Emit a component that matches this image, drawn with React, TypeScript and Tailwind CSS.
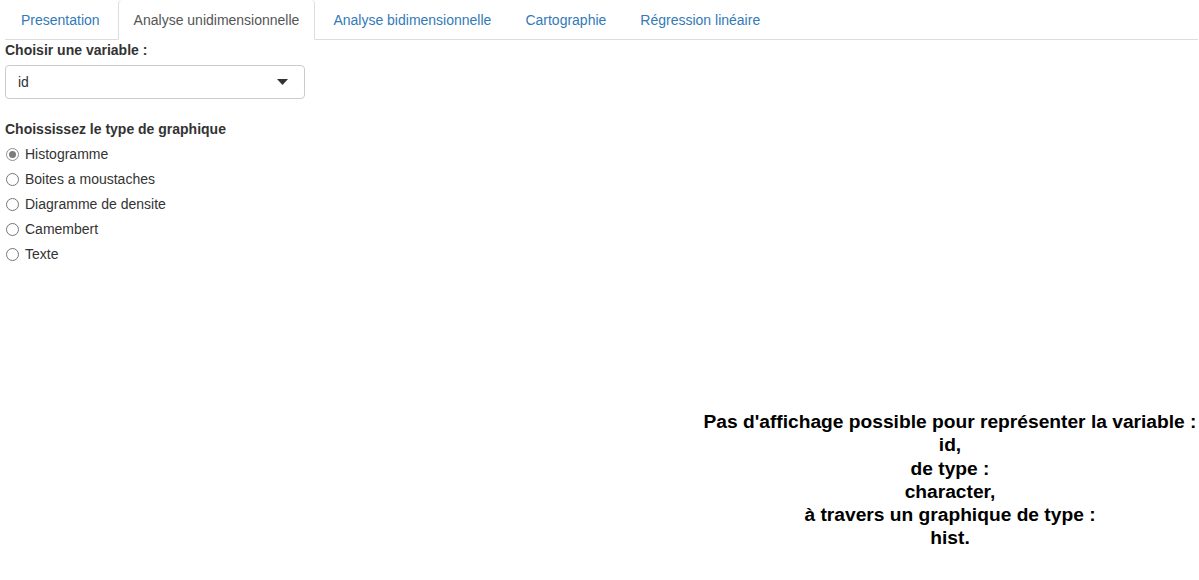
const tabs = [
    "Presentation",
    "Analyse unidimensionnelle",
    "Analyse bidimensionnelle",
    "Cartographie",
    "Régression linéaire"
];

const activeTab = 1;

const choices = [
    "Histogramme",
    "Boites a moustaches",
    "Diagramme de densite",
    "Camembert",
    "Texte"
];

function Radio({ checked }: { checked: boolean }) {
    return (
        <span
            className={`flex size-[13px] items-center justify-center rounded-full border ${
                checked ? "border-[#8f8f8f]" : "border-[#767676]"
            } bg-white`}
        >
            {checked && <span className="size-[7px] rounded-full bg-[#7d7d7d]" />}
        </span>
    );
}

export default function App() {
    return (
        <div className="min-h-[580px] bg-white pl-[5px] pr-px font-['Liberation_Sans',Arial,sans-serif] text-[14px] leading-5 text-[#333]">
            <ul className="flex border-b border-[#ddd]">
                {tabs.map((tab, i) => (
                    <li key={tab} className="-mb-px mr-[2px]">
                        <span
                            className={`flex h-10 items-center rounded-t-[4px] border border-t-0 px-[15px] ${
                                i === activeTab
                                    ? "border-[#ddd] border-b-white bg-white text-[#555]"
                                    : "border-transparent text-[#337ab7]"
                            }`}
                        >
                            {tab}
                        </span>
                    </li>
                ))}
            </ul>

            <div>
                <label className="mb-[5px] block h-5 font-bold">
                    Choisir une variable :
                </label>
                <div className="flex h-[34px] w-[300px] items-center justify-between rounded-[4px] border border-[#ccc] pl-[12px] pr-[16px]">
                    <span>id</span>
                    <svg width="11" height="6" viewBox="0 0 11 6">
                        <path d="M0 0h11L5.5 6z" fill="#333" />
                    </svg>
                </div>
            </div>

            <div className="mt-[20px]">
                <label className="mb-[5px] block h-5 font-bold">
                    Choississez le type de graphique
                </label>
                <div className="flex flex-col gap-[5px]">
                    {choices.map((c, i) => (
                        <div key={c} className="flex h-5 items-center">
                            <span className="ml-px mr-[6px]">
                                <Radio checked={i === 0} />
                            </span>
                            <span>{c}</span>
                        </div>
                    ))}
                </div>
            </div>

            <div className="-mr-px mt-[146px] flex justify-end">
                <div className="w-[498px] text-center text-[19.2px] font-bold leading-[23.3px] text-black">
                    <div className="whitespace-nowrap">
                        Pas d'affichage possible pour représenter la variable :
                    </div>
                    <div>id,</div>
                    <div>de type :</div>
                    <div>character,</div>
                    <div>à travers un graphique de type :</div>
                    <div>hist.</div>
                </div>
            </div>
        </div>
    );
}
